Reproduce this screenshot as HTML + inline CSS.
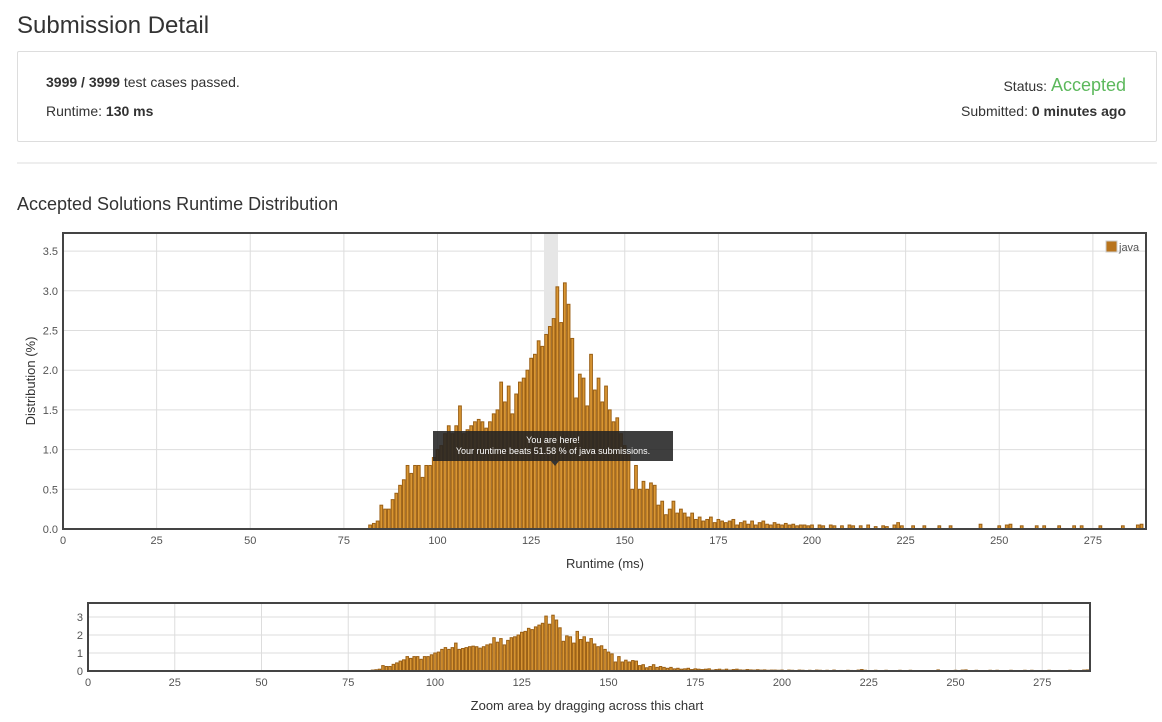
<!DOCTYPE html>
<html><head><meta charset="utf-8"><style>
body{margin:0;background:#fff;font-family:"Liberation Sans",Arial,sans-serif;color:#333;width:1162px;height:722px;overflow:hidden;position:relative}
.abs{position:absolute}
h1{position:absolute;left:17px;top:12px;margin:0;font-size:24px;font-weight:normal;color:#333}
.box{position:absolute;left:17px;top:51px;width:1138px;height:89px;border:1px solid #ddd;border-radius:2px}
.t{position:absolute;font-size:14px;white-space:nowrap}
h3{position:absolute;left:17px;top:194px;margin:0;font-size:18px;font-weight:normal;color:#333}
svg text{font-family:"Liberation Sans",Arial,sans-serif}
</style></head><body>
<h1>Submission Detail</h1>
<div class="box"></div>
<div class="t" style="left:46px;top:74px"><b>3999 / 3999</b> test cases passed.</div>
<div class="t" style="left:46px;top:103px">Runtime: <b>130 ms</b></div>
<div class="t" style="right:36px;top:75px">Status: <span style="color:#5cb85c;font-size:18px">Accepted</span></div>
<div class="t" style="right:36px;top:103px">Submitted: <b>0 minutes ago</b></div>
<div class="abs" style="left:17px;top:162px;width:1140px;height:2px;background:#eee"></div>
<h3>Accepted Solutions Runtime Distribution</h3>
<svg id="s" class="abs" style="left:0;top:0" width="1162" height="722"></svg>
<div class="abs" style="left:433px;top:431px;width:240px;height:30px;background:rgba(35,35,35,0.88);color:#fff;font-size:9px;text-align:center;line-height:11px;padding-top:4px;box-sizing:border-box">You are here!<br>Your runtime beats 51.58 % of java submissions.</div>
<div class="abs" style="left:551px;top:461px;width:0;height:0;border-left:4px solid transparent;border-right:4px solid transparent;border-top:5px solid #333"></div>
<script>
var v={82:.05,83:.07,84:.1,85:.3,86:.25,87:.25,88:.37,89:.45,90:.55,91:.62,92:.8,93:.7,94:.8,95:.8,96:.65,97:.8,98:.8,99:.9,100:1.0,101:1.05,102:1.2,103:1.3,104:1.2,105:1.3,106:1.55,107:1.2,108:1.25,109:1.3,110:1.35,111:1.38,112:1.35,113:1.27,114:1.35,115:1.45,116:1.5,117:1.85,118:1.6,119:1.8,120:1.45,121:1.7,122:1.85,123:1.9,124:2.0,125:2.15,126:2.2,127:2.37,128:2.3,129:2.45,130:2.55,131:2.65,132:3.05,133:2.6,134:3.1,135:2.83,136:2.4,137:1.65,138:1.95,139:1.9,140:1.55,141:2.2,142:1.75,143:1.9,144:1.6,145:1.8,146:1.5,147:1.35,148:1.4,149:1.2,150:1.05,151:.95,152:.5,153:.8,154:.5,155:.6,156:.5,157:.58,158:.55,159:.3,160:.35,161:.18,162:.25,163:.35,164:.2,165:.25,166:.2,167:.15,168:.2,169:.12,170:.15,171:.1,172:.12,173:.15,174:.08,175:.12,176:.1,177:.08,178:.1,179:.12,180:.05,181:.08,182:.1,183:.06,184:.1,185:.05,186:.08,187:.1,188:.06,189:.05,190:.08,191:.06,192:.05,193:.07,194:.05,195:.06,196:.04,197:.05,198:.05,199:.04,200:.05,202:.05,203:.04,205:.05,206:.04,208:.04,210:.05,211:.04,213:.04,215:.05,217:.03,219:.04,220:.03,222:.05,223:.08,224:.04,227:.04,230:.04,234:.04,237:.04,245:.06,250:.04,252:.05,253:.06,256:.04,260:.04,262:.04,266:.04,270:.04,272:.04,277:.04,283:.04,287:.05,288:.06};
var s='';
function chart(L,T,R,B,pxms,pxu,ymax,ystep,fs,labels){
 var W=R-L;
 s+='<rect x="'+L+'" y="'+T+'" width="'+W+'" height="'+(B-T)+'" fill="#fff"/>';
 for(var m=0;m<=275;m+=25){var x=L+m*pxms;s+='<line x1="'+x+'" y1="'+T+'" x2="'+x+'" y2="'+B+'" stroke="#ddd"/>';s+='<text x="'+x+'" y="'+(B+15)+'" font-size="'+fs+'" fill="#545454" text-anchor="middle">'+m+'</text>';}
 for(var u=0;u<=ymax+1e-9;u+=ystep){var y=B-u*pxu;s+='<line x1="'+L+'" y1="'+y+'" x2="'+R+'" y2="'+y+'" stroke="#ddd"/>';s+='<text x="'+(L-5)+'" y="'+(y+4)+'" font-size="'+fs+'" fill="#545454" text-anchor="end">'+(labels?u.toFixed(1):u)+'</text>';}
 if(labels)s+='<rect x="544" y="'+T+'" width="14" height="'+(B-T)+'" fill="#e6e6e6"/>';
 for(var k in v){var h=v[k]*pxu;var x=L+(k-0.5)*pxms;s+='<rect x="'+(x+0.5)+'" y="'+(B-h)+'" width="'+(pxms-1)+'" height="'+h+'" fill="#d99633" stroke="#9a5f14" stroke-width="1"/>';}
 s+='<rect x="'+L+'" y="'+T+'" width="'+W+'" height="'+(B-T)+'" fill="none" stroke="#444" stroke-width="2"/>';
}
chart(63,233,1146,529,3.745,79.4,3.5,0.5,11,true);
chart(88,603,1090,671,3.47,18,3,1,11,false);
s+='<rect x="1106" y="241" width="11" height="11" fill="#b8741d" stroke="#ccc"/><text x="1119" y="251" font-size="11" fill="#545454">java</text>';
s+='<text x="605" y="568" font-size="13" fill="#333" text-anchor="middle">Runtime (ms)</text>';
s+='<text transform="translate(35,381) rotate(-90)" font-size="13" fill="#333" text-anchor="middle">Distribution (%)</text>';
s+='<text x="587" y="710" font-size="13" fill="#333" text-anchor="middle">Zoom area by dragging across this chart</text>';
document.getElementById('s').innerHTML=s;
</script>
</body></html>
